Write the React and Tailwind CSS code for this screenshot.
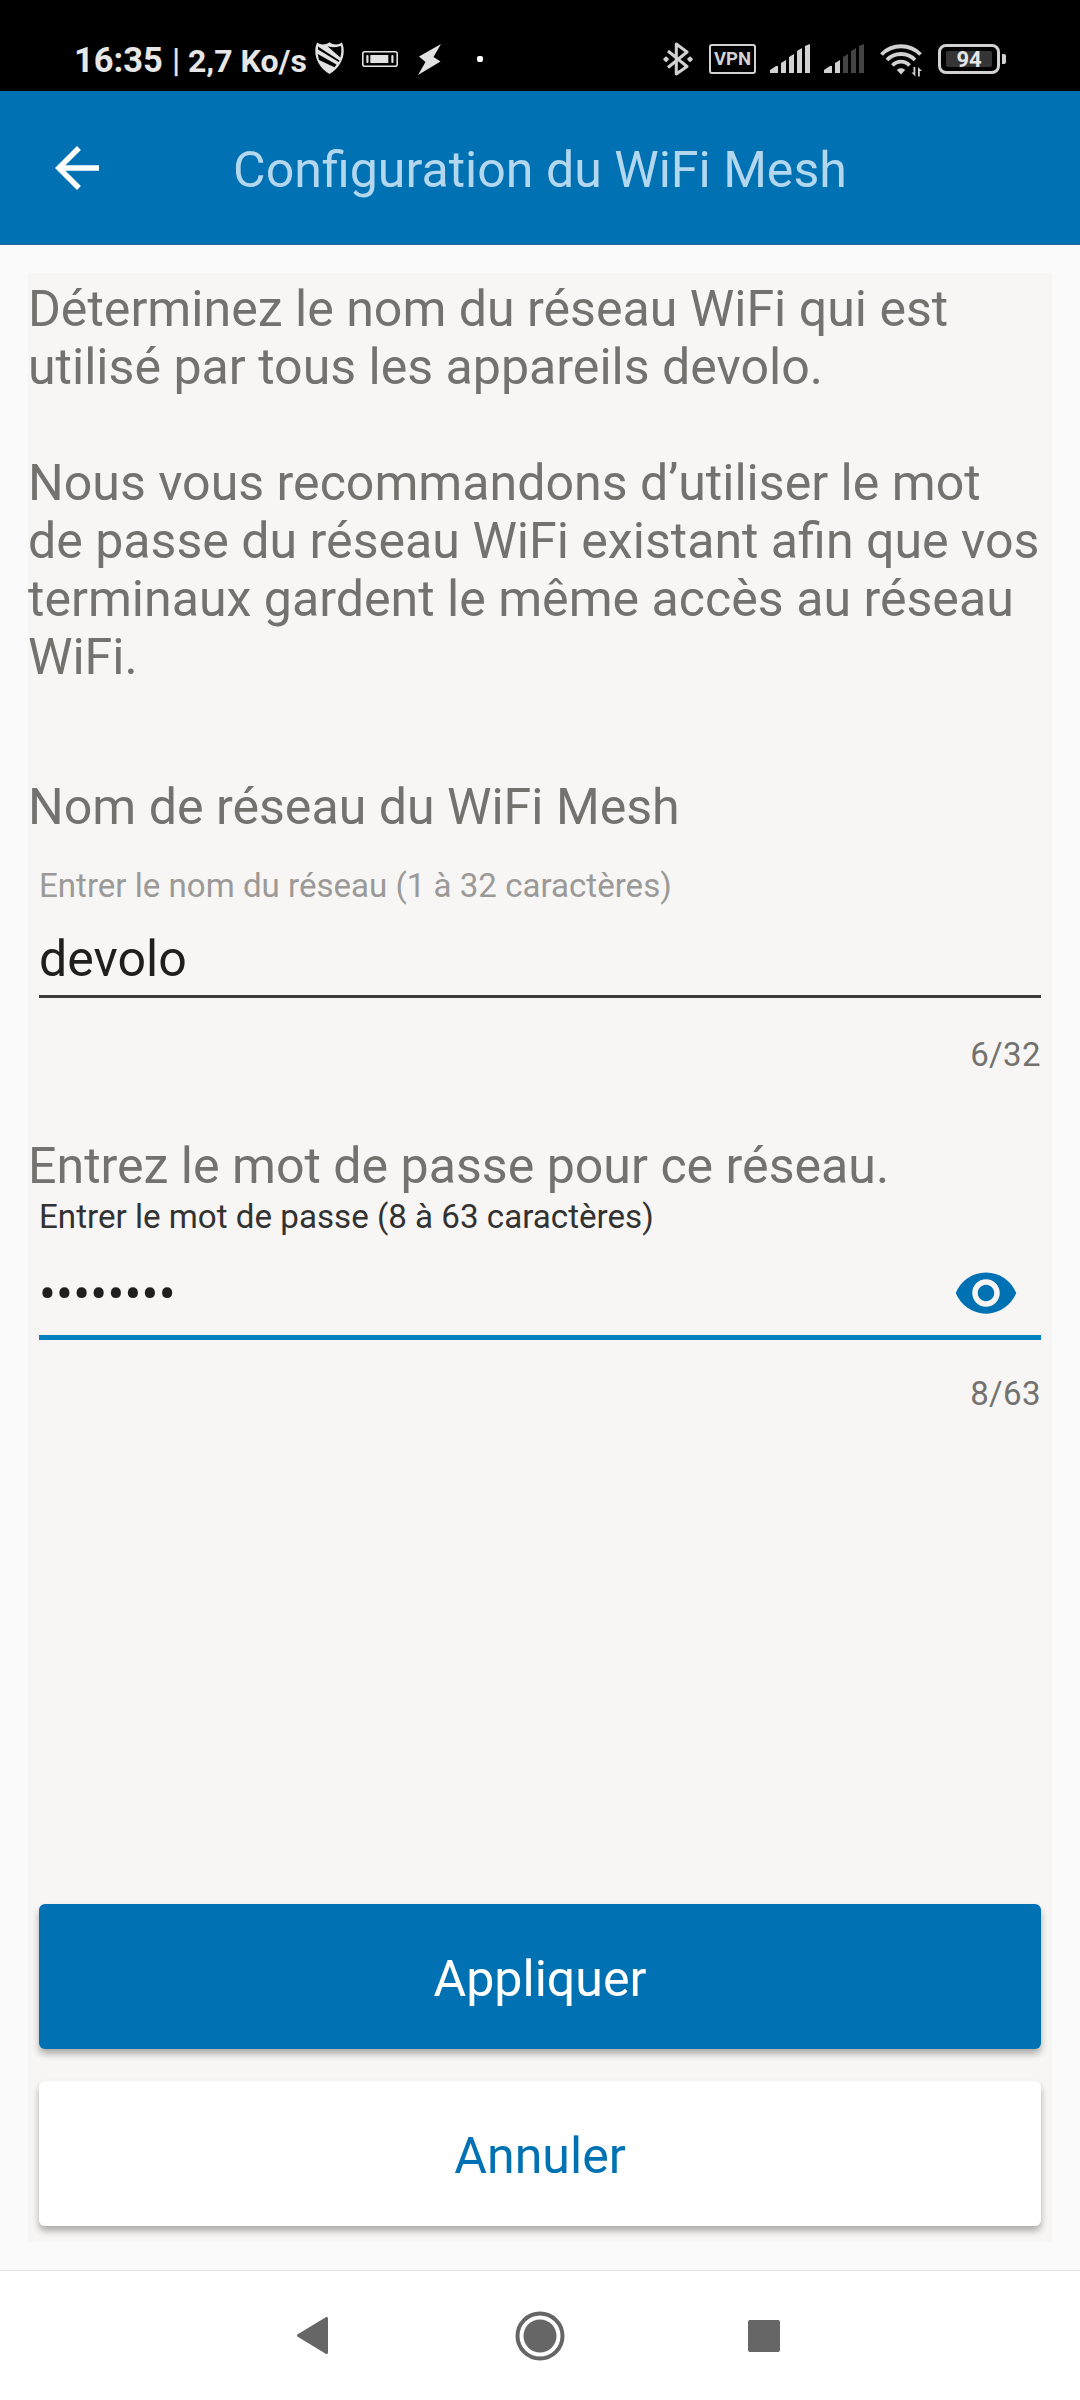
import { useState } from 'react';

const SIGNAL_BARS = [
  '0,26 6,22 8,22 8,29 0,29',
  '11,19 16,16 16,29 11,29',
  '19,13 24,10 24,29 19,29',
  '27,7 32,4 32,29 27,29',
  '35,2 40,0 40,29 35,29',
];

function SignalIcon({ level, className }) {
  return (
    <svg viewBox="0 0 40 29" className={`h-[29px] w-10 shrink-0 ${className}`}>
      {SIGNAL_BARS.map((points, i) => (
        <polygon key={points} points={points} fill={i < level ? '#d2d2d2' : '#444444'} />
      ))}
    </svg>
  );
}

function ShieldIcon() {
  return (
    <svg viewBox="0 0 29 32" className="ml-[10px] h-8 w-[29px] shrink-0">
      <path
        d="M14.500 0.200 C11 2.800 6 3.400 2 0.600 L0.600 5 C-1 15 3.500 25 14.500 32 C25.500 25 30 15 28.400 5 L27 0.600 C23 3.400 18 2.800 14.500 0.200 Z"
        fill="#e2e2e2"
      />
      <path d="M12.500 4.200 C17 5.500 22 5.500 26 4 C26.600 8 26.400 12 25.300 15.500 Z" fill="#000000" />
      <path d="M3 4.500 L9 8.500 L24.500 18.500 L23.800 20 L3 7.500 Z" fill="#000000" />
      <path d="M2.700 12 L21.500 22.500 L19.500 25.200 L4 18 Z" fill="#000000" />
    </svg>
  );
}

function StatusBar() {
  return (
    <header className="flex h-[91px] items-center bg-black pt-[26px] pl-[74px] text-[#e6e6e6]">
      <div className="flex h-[65px] w-full items-start pt-[16px]">
        <div className="mt-[2px] flex h-8 items-baseline font-bold whitespace-nowrap">
          <span className="w-[98px] text-[34.500px] leading-8">16:35</span>
          <span className="w-[16px] text-[33px] leading-8 font-medium">|</span>
          <span className="w-[117px] text-[32px] leading-8">2,7 Ko/s</span>
        </div>
        <ShieldIcon />
        <svg viewBox="0 0 36 16" className="mt-[9px] ml-[18px] h-4 w-9 shrink-0">
          <rect x="0.800" y="0.800" width="34.400" height="14.400" rx="2" fill="none" stroke="#e2e2e2" strokeWidth="1.600" />
          <rect x="4.300" y="4" width="2.200" height="8" rx="1" fill="#e2e2e2" />
          <rect x="8.300" y="4" width="18" height="8" rx="0.500" fill="#e2e2e2" />
          <rect x="29.300" y="4" width="2.200" height="8" rx="1" fill="#e2e2e2" />
        </svg>
        <svg viewBox="0 0 23 31" className="mt-[2px] ml-5 h-[31px] w-[23px] shrink-0">
          <polygon points="23,0 1,12.500 7.500,18 0,31 22.500,17.500 15.500,13" fill="#e2e2e2" />
        </svg>
        <div className="mt-[14px] ml-9 h-1.5 w-1.5 rounded-xs bg-white" />

        <svg viewBox="0 0 30 34" className="ml-[180px] h-[34px] w-[30px] shrink-0">
          <path
            d="M5 9 L24 24.500 L13.300 32 V2 L24 10 L5 25.500"
            fill="none"
            stroke="#d2d2d2"
            strokeWidth="3"
            strokeLinejoin="round"
          />
          <rect x="0.800" y="15" width="4.500" height="4.500" rx="1" transform="rotate(45 3 17.250)" fill="#d2d2d2" />
          <rect x="24.800" y="15" width="4.500" height="4.500" rx="1" transform="rotate(45 27 17.250)" fill="#d2d2d2" />
        </svg>
        <div className="mt-[2px] ml-4 flex h-[30px] w-[47px] shrink-0 items-center justify-center rounded-[3px] border-2 border-[#d2d2d2] text-[18.500px] leading-none font-bold text-[#d2d2d2]">
          VPN
        </div>
        <SignalIcon level={5} className="mt-[2px] ml-[14px]" />
        <SignalIcon level={2} className="mt-[2px] ml-[14px]" />
        <svg viewBox="0 0 42 34" className="mt-[1px] ml-4 h-[34px] w-[42px] shrink-0">
          <g fill="none" stroke="#d2d2d2" strokeWidth="3.800">
            <path d="M1.500 11.500 C12 0.500 30 0.500 40.500 11.500" />
            <path d="M7 17 C14.500 9 27.500 9 35 17" />
            <path d="M12.500 22.500 C17 17.300 25 17.300 29.500 22.500" />
          </g>
          <path d="M16.800 27 C19 24.600 23 24.600 25.200 27 L21 31.500 Z" fill="#d2d2d2" />
          <path d="M35.300 24 V33.500 L31.500 29.500 H33.500 V24 Z M38 33.500 V24 L42 28 H39.800 V33.500 Z" fill="#d2d2d2" />
        </svg>
        <div className="mt-[2px] ml-4 flex h-[30px] w-[62px] shrink-0 items-center justify-center rounded-lg border-[3px] border-[#d2d2d2]">
          <div className="flex h-4 w-[46px] items-center justify-center rounded-xs bg-[#353535] pt-[2px] text-[22px] leading-none font-bold text-[#e6e6e6]">
            94
          </div>
        </div>
        <div className="mt-[12px] ml-[2px] h-[10px] w-1 rounded-r-xs bg-[#d2d2d2]" />
      </div>
    </header>
  );
}

function AppBar() {
  return (
    <div className="grid h-[154px] grid-cols-[154px_1fr_154px] items-center border-b border-[#1b6796] bg-[#0071b3]">
      <button className="pl-11">
        <svg viewBox="0 0 24 24" className="h-[66px] w-[66px]">
          <path d="M20 11H7.830l5.590-5.590L12 4l-8 8 8 8 1.410-1.410L7.830 13H20v-2z" fill="#ffffff" />
        </svg>
      </button>
      <h1 className="pt-1 text-center text-[50.100px] leading-[58px] whitespace-nowrap text-[#b2d7ee]">
        Configuration du WiFi Mesh
      </h1>
    </div>
  );
}

function NavBar() {
  return (
    <nav className="flex h-[130px] items-center border-t border-[#e2e2e2] bg-white">
      <svg viewBox="0 0 31 37" className="ml-[297px] h-[37px] w-[31px]">
        <path d="M29.500 1.500 V35.500 L1.500 18.500 Z" fill="#666666" stroke="#666666" strokeWidth="3" strokeLinejoin="round" />
      </svg>
      <svg viewBox="0 0 50 50" className="ml-[187px] h-[50px] w-[50px]">
        <circle cx="25" cy="25" r="22.500" fill="none" stroke="#666666" strokeWidth="4" />
        <circle cx="25" cy="25" r="16.500" fill="#666666" />
      </svg>
      <div className="ml-[183px] h-8 w-8 rounded-xs bg-[#666666]" />
    </nav>
  );
}

export default function App() {
  const [name] = useState('devolo');
  const [password] = useState('••••••••');

  return (
    <div className="flex h-[2400px] w-[1080px] flex-col overflow-hidden bg-[#fafafa] font-[Roboto,sans-serif]">
      <StatusBar />
      <AppBar />

      <main className="mx-7 mt-7 mb-7 flex flex-1 flex-col bg-[#f7f6f4] text-[50.100px] leading-[58px] text-[#73726f]">
        <p className="mt-[7px] whitespace-nowrap">
          Déterminez le nom du réseau WiFi qui est
          <br />
          utilisé par tous les appareils devolo.
        </p>
        <p className="mt-[58px] whitespace-nowrap">
          Nous vous recommandons d’utiliser le mot
          <br />
          de passe du réseau WiFi existant afin que vos
          <br />
          terminaux gardent le même accès au réseau
          <br />
          WiFi.
        </p>

        <h2 className="mt-[92px]">Nom de réseau du WiFi Mesh</h2>
        <div className="mx-[11px] mt-[30px] flex flex-col">
          <label className="text-[33.100px] leading-[39px] text-[#9b9a98]">Entrer le nom du réseau (1 à 32 caractères)</label>
          <div className="mt-[25px] h-[68px] border-b-[3px] border-[#3d3c3c] text-[#1f1f1f]">{name}</div>
          <span className="mt-[37px] self-end text-[33px] leading-[39px] tracking-[0.012em]">6/32</span>
        </div>

        <h2 className="mt-[63px]">Entrez le mot de passe pour ce réseau.</h2>
        <div className="mx-[11px] mt-[2px] flex flex-col">
          <label className="text-[33.150px] leading-[39px] text-[#333232]">Entrer le mot de passe (8 à 63 caractères)</label>
          <div className="flex h-[104px] items-center justify-between border-b-[5px] border-[#0581c1] pt-[14px] pr-[22px] text-[#1f1f1f]">
            <span className="pt-[2px] tracking-[0.004em]">{password}</span>
            <svg viewBox="0 0 24 24" className="h-[66px] w-[66px]">
              <path
                d="M12 4.500C7 4.500 2.730 7.610 1 12c1.730 4.390 6 7.500 11 7.500s9.270-3.110 11-7.500c-1.730-4.390-6-7.500-11-7.500zM12 17c-2.760 0-5-2.240-5-5s2.240-5 5-5 5 2.240 5 5-2.240 5-5 5zm0-8c-1.660 0-3 1.340-3 3s1.340 3 3 3 3-1.340 3-3-1.340-3-3-3z"
                fill="#0071b3"
              />
            </svg>
          </div>
          <span className="mt-[34px] self-end text-[33px] leading-[39px] tracking-[0.012em]">8/63</span>
        </div>

        <div className="mx-[11px] mt-auto mb-4 flex flex-col gap-8">
          <button className="h-[145px] rounded-[6px] bg-[#0071b3] pt-[5px] text-white shadow-[0_5px_7px_rgba(0,0,0,0.3)]">
            Appliquer
          </button>
          <button className="h-[145px] rounded-[6px] bg-white pt-[5px] text-[#0071b3] shadow-[0_5px_7px_rgba(0,0,0,0.3)]">
            Annuler
          </button>
        </div>
      </main>

      <NavBar />
    </div>
  );
}
